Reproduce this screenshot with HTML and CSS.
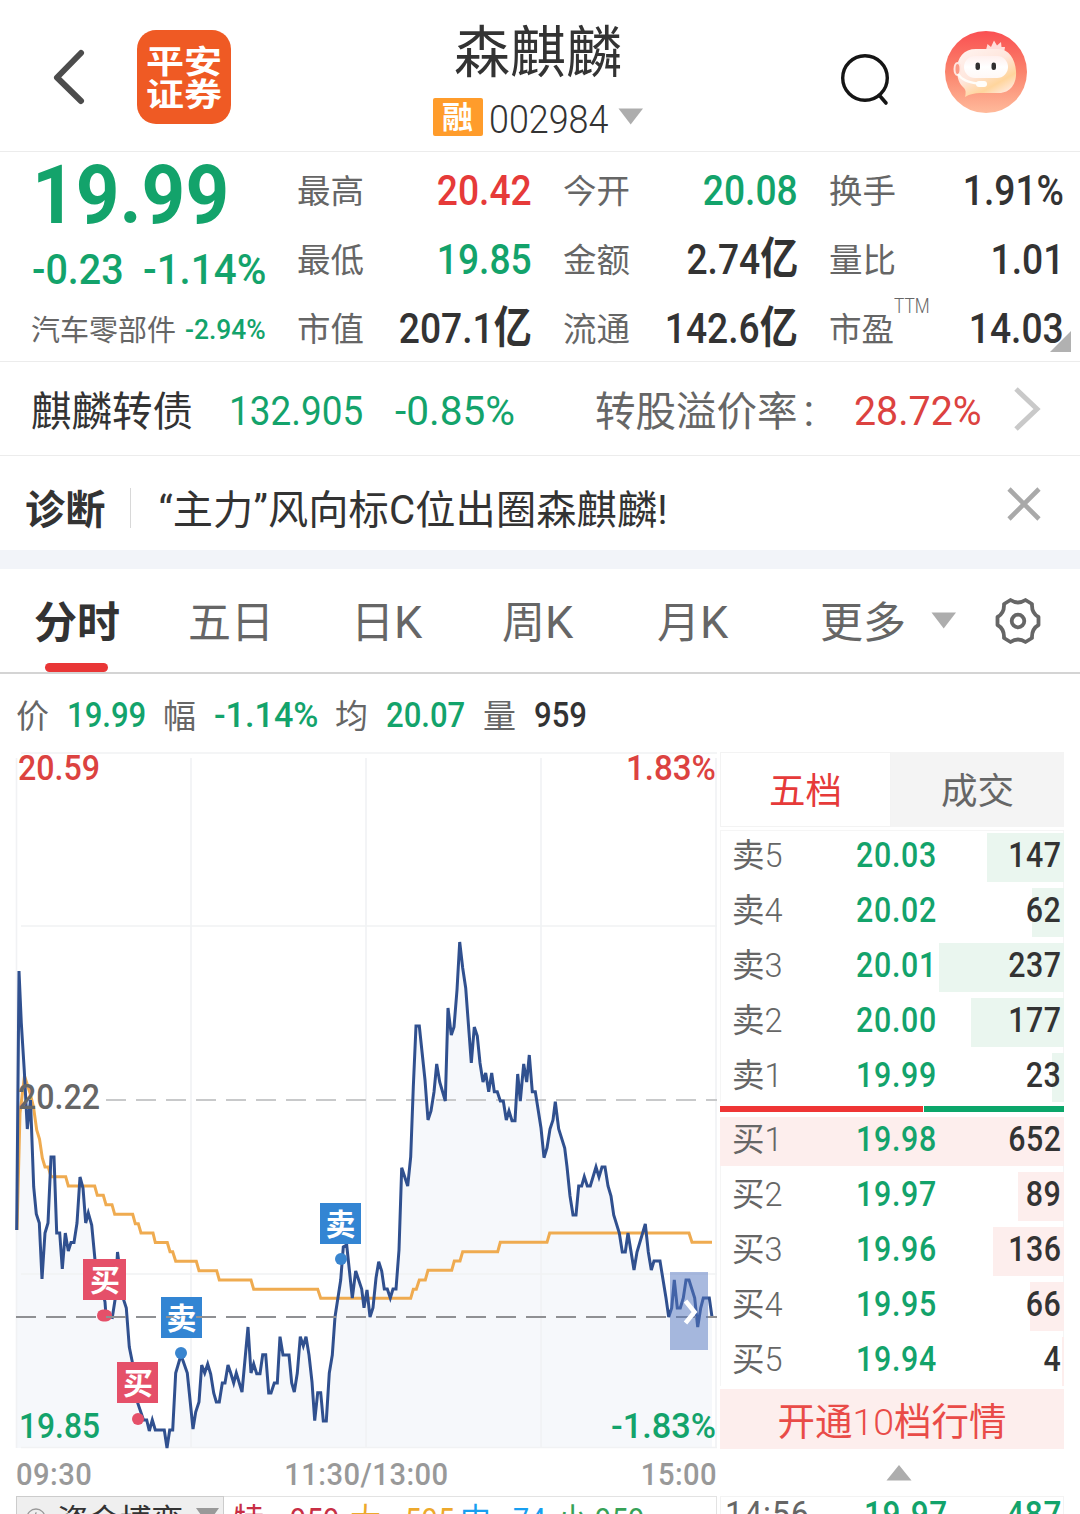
FILE: index.html
```html
<!DOCTYPE html>
<html lang="zh-CN">
<head>
    <meta charset="UTF-8">
    <meta name="viewport" content="width=device-width, initial-scale=1.0">
    <title>森麒麟 002984</title>
    <link rel="stylesheet" href="styles.css">
</head>
<body>
    <!-- Header -->
    <header class="header">
        <svg class="back" width="36" height="60" viewBox="0 0 36 60"><path d="M30 6 L6 30.500 L30 54" fill="none" stroke="#4c4c4c" stroke-width="6" stroke-linecap="round" stroke-linejoin="round"/></svg>
        <div class="logo"><span>平安</span><span>证券</span></div>
        <div class="title">
            <h1>森麒麟</h1>
            <div class="code-row">
                <span class="badge">融</span>
                <span class="code num">002984</span>
                <svg width="26" height="17" viewBox="0 0 26 17"><path d="M0.500 0.500 H25 L12.700 16.500 Z" fill="#adadad"/></svg>
            </div>
        </div>
        <svg class="search" width="52" height="56" viewBox="0 0 52 56"><circle cx="25" cy="27" r="22.300" fill="none" stroke="#151515" stroke-width="3.400"/><path d="M39.500 44.500 L46 52" stroke="#151515" stroke-width="3.600" stroke-linecap="round"/></svg>
        <svg class="avatar" width="82" height="82" viewBox="0 0 82 82">
            <defs>
                <linearGradient id="sky" x1="0" y1="0" x2="0" y2="1"><stop offset="0" stop-color="#fa5052"/><stop offset="0.500" stop-color="#fa836c"/><stop offset="1" stop-color="#ffba9b"/></linearGradient>
                <linearGradient id="head" x1="0" y1="0" x2="0.700" y2="1"><stop offset="0" stop-color="#fff4f1"/><stop offset="0.500" stop-color="#ffe6dc"/><stop offset="0.800" stop-color="#ffd59c"/><stop offset="1" stop-color="#ffe9dc"/></linearGradient>
                <linearGradient id="face" x1="0" y1="0" x2="0" y2="1"><stop offset="0" stop-color="#fff0ee"/><stop offset="0.500" stop-color="#ffffff"/><stop offset="1" stop-color="#fff8f6"/></linearGradient>
            </defs>
            <circle cx="41" cy="41" r="41" fill="url(#sky)"/>
            <path d="M41 19 L42.500 13 L46 16 L49 9.500 L52 14.500 L56 11 L56.500 16 L60 16 L59 22 Z" fill="#ffdcd9"/>
            <path d="M31 18 H53 C64 18 70 28 71 40 C72 53 65 62 54 62 H35 C30 62 25 63 20 66 C21 62 21 59 19 57 C14 53 12 46 12 39 C12 26 19 18 31 18 Z" fill="url(#head)"/>
            <ellipse cx="12.500" cy="38" rx="3" ry="6" fill="#fb9a86" stroke="#ffe6df" stroke-width="2"/>
            <rect x="19" y="25" width="44" height="22" rx="11" fill="url(#face)"/>
            <rect x="30.500" y="31.500" width="4.500" height="7.500" rx="2.200" fill="#303030"/>
            <rect x="46.500" y="31.500" width="4.500" height="7.500" rx="2.200" fill="#303030"/>
            <path d="M13 43 C17 50 25 51 35 53" fill="none" stroke="#fffdf9" stroke-width="2.400"/>
            <rect x="31" y="50" width="11" height="6" rx="3" fill="#fffefb"/>
        </svg>
    </header>

    <!-- Quote summary -->
    <section class="quote">
        <div class="price-box green">
            <div class="price num">19.99</div>
            <div class="change"><span class="num c1">-0.23</span><span class="num c2">-1.14%</span></div>
            <div class="industry"><span class="name">汽车零部件</span><span class="num c2">-2.94%</span></div>
        </div>
        <div class="stats">
            <div class="stat"><label>最高</label><b class="num red">20.42</b></div>
            <div class="stat"><label>今开</label><b class="num green">20.08</b></div>
            <div class="stat"><label>换手</label><b class="num">1.91%</b></div>
            <div class="stat"><label>最低</label><b class="num green">19.85</b></div>
            <div class="stat"><label>金额</label><b class="num">2.74<i>亿</i></b></div>
            <div class="stat"><label>量比</label><b class="num">1.01</b></div>
            <div class="stat"><label>市值</label><b class="num">207.1<i>亿</i></b></div>
            <div class="stat"><label>流通</label><b class="num">142.6<i>亿</i></b></div>
            <div class="stat last"><label>市盈<sup>TTM</sup></label><b class="num">14.03</b></div>
        </div>
        <svg class="corner" width="21" height="21" viewBox="0 0 21 21"><path d="M21 0 V21 H0 Z" fill="#b1b1b1"/></svg>
    </section>

    <!-- Convertible bond -->
    <section class="bond">
        <span class="bond-name">麒麟转债</span>
        <span class="bond-price num green">132.905</span>
        <span class="bond-change num green">-0.85%</span>
        <span class="bond-label">转股溢价率<em>:</em></span>
        <span class="bond-rate num red2">28.72%</span>
        <svg width="28" height="46" viewBox="0 0 28 46"><path d="M3 3 L24 23 L3 43" fill="none" stroke="#c9c9c9" stroke-width="5"/></svg>
    </section>

    <section class="diagnosis">
        <strong>诊断</strong>
        <p>“主力”风向标C位出圈森麒麟!</p>
        <svg width="34" height="34" viewBox="0 0 34 34"><path d="M2 2 L32 32 M32 2 L2 32" stroke="#a9a9a9" stroke-width="4.600"/></svg>
    </section>

    <!-- Chart tabs -->
    <nav class="tabs">
        <a class="tab active">分时</a>
        <a class="tab">五日</a>
        <a class="tab">日<em>K</em></a>
        <a class="tab">周<em>K</em></a>
        <a class="tab">月<em>K</em></a>
        <a class="tab more">更多</a>
        <svg class="caret" width="26" height="17" viewBox="0 0 26 17"><path d="M0.500 0.500 H25 L12.700 16.500 Z" fill="#adadad"/></svg>
        <svg class="gear" width="46" height="48" viewBox="0 0 46 48"><path d="M15.500 3 Q23 8 30.500 3 L37 7 Q36.500 16 43.500 20 V28 Q36.500 32 37 41 L30.500 45 Q23 40 15.500 45 L9 41 Q9.500 32 2.500 28 V20 Q9.500 16 9 7 Z" fill="none" stroke="#666" stroke-width="3.800" stroke-linejoin="round"/><circle cx="23" cy="24" r="6.300" fill="none" stroke="#666" stroke-width="3.800"/></svg>
    </nav>

    <div class="info">
        <span class="k">价</span><span class="num green v1">19.99</span>
        <span class="k">幅</span><span class="num green v2">-1.14%</span>
        <span class="k">均</span><span class="num green v3">20.07</span>
        <span class="k">量</span><span class="num">959</span>
    </div>

    <main class="main">
        <div class="chart-col">
            <svg class="chart" width="720" height="698" viewBox="0 751 720 698">
                <path d="M16.700 1230 L19 971 L21.300 1023 L24.300 1071 L27.300 1129 L30.500 1100 L33.700 1187 L36.300 1214 L39.300 1223 L42 1279 L45 1233 L48 1223 L51 1157 H54 L56.700 1233 H59.700 L62.300 1269 L65.300 1233 L68.300 1251 L71 1242.500 H74 L77 1223 L80 1177 L83 1188 L85.700 1223 L88.300 1213 L91.700 1225 L95 1260 L105 1302 L106 1316 L112.300 1317.500 L115 1300 L117.500 1252 L123.700 1300 L126.300 1308 L129.300 1347 L132.500 1363 L137.700 1403 L143.500 1420 H146.700 L149.300 1431 L152.300 1420 L155.300 1430 H164.300 L167 1448 L169.700 1430 H172.700 L175.700 1373 L181 1355 L187.300 1373 L193 1429 L195.700 1412 L199 1402 L201.700 1365 L204.700 1373 L207.700 1364 L210.700 1374 L213.700 1393 L216.300 1402 H219.300 L222.300 1383 H225 L228 1365 L230.700 1373 L233.700 1383 L236.300 1373 L242 1392 L248 1327 L251 1373 L253.700 1364 L256.700 1373.700 H260 L262.700 1354.700 H265.700 L268.700 1393 H271 L274.300 1383 H277.300 L280 1336.700 L283 1355 H289 L291.700 1383 L294.300 1392 L297.300 1373 L300.300 1336.700 L303.300 1346 L306 1336.700 L309 1355 L312 1382 L314.700 1420.700 L317.700 1392.700 H320.700 L323.300 1421 H326.300 L329.300 1373 L332.300 1355 L335 1317 L340.700 1280 L343.300 1247 L346.700 1245 L352.300 1298 L355.700 1271 L361.700 1289 L364 1307.700 L367 1290 L370 1317 L373 1307.700 L376 1278 L378.700 1261.700 L381.700 1271 L384.300 1289 H387.300 L390.300 1298 L393 1289 H396 L399 1250 L401.700 1167.700 L407.700 1186 L410.700 1157 L413.300 1087 L416 1026 H419.300 L425 1080 L428 1120 L431 1111 L434 1092 L436.700 1064 L439.700 1082 L445.300 1101 L448 1008 L451.300 1035 L454 1027 L457 990 L459.700 942 L462.700 968 L465.700 988 L471.300 1063 L474.300 1027 L477.300 1036 L480 1063 L483 1082 L485.700 1073 L488.700 1091.700 L491.700 1073 L494.300 1091.700 H497.300 L500.300 1101 H503.300 L506.300 1120 L509 1111 L512 1120.700 H515 L517.700 1074 L520.300 1101 L523.700 1064 L526.700 1082 L529.300 1055 L532.300 1091.700 H535.300 L541 1128 L544 1157.700 L547 1148 L550 1129 L553 1120 L555.300 1101.700 L558.700 1129 L564.700 1148 L567 1166.700 L570 1196 L573 1215 H576 L578.700 1186 H581.700 L584.300 1176.700 L587.300 1186 H590.300 L596 1167 L599 1177 L602 1167 H605 L608 1186 L611 1196 L613.700 1215 L619.300 1233 L622.300 1252 H625.300 L628 1233 L634 1270 L637 1252 L645.300 1224 L648.300 1252 L651.300 1270 L654 1261 H660 L666 1298 L668.700 1317 L671.700 1308 L674.300 1280 L677.300 1308 H680.300 L683.300 1298 L686 1280 H689 L694.700 1298 L697.700 1327 L700.700 1308 L703.300 1298 H709.300 L712 1317 V1448 H16.700 Z" fill="#f6f8fb"/>
                <!-- grid -->
                <g stroke="#f1f2f4" stroke-width="1.600" fill="none">
                    <path d="M16.500 758 V1448 M191 758 V1448 M366 758 V1448 M541 758 V1448 M716 758 V1448"/>
                    <path d="M21 753 H717 M21 926 H717 M21 1274 H717 M21 1447.500 H717"/>
                </g>
                <path d="M106 1100 H717" stroke="#c8c9ca" stroke-width="2" stroke-dasharray="20 10"/>
                <path class="avg" d="M17 1230 L20 1113 L24.500 1076 L30 1093 L33.500 1107 L36.700 1130 L39.500 1139 L42.300 1158 L45 1167 H48.300 L51 1176.700 H65.700 L68.300 1186 H94.700 L97.300 1195.300 H103.300 L106 1204.700 H112 L114.700 1214.300 H132.700 L135.300 1223.700 H138.300 L141 1233 H153 L155.300 1242.500 H167.300 L170 1251.700 H172.700 L175.700 1261.300 H196.300 L199 1270.700 H216.700 L219.300 1280 H251 L253.700 1289.300 H317.700 L320.700 1298.300 H410.700 L413.300 1289.300 H416.300 L419.300 1280 H425.300 L428 1270.300 H451.700 L454.300 1261 H460 L462.700 1251.700 H497.700 L500.300 1242.300 H547 L549.700 1233 H689 L692 1242.300 H712"/>
                <path class="line" d="M16.700 1230 L19 971 L21.300 1023 L24.300 1071 L27.300 1129 L30.500 1100 L33.700 1187 L36.300 1214 L39.300 1223 L42 1279 L45 1233 L48 1223 L51 1157 H54 L56.700 1233 H59.700 L62.300 1269 L65.300 1233 L68.300 1251 L71 1242.500 H74 L77 1223 L80 1177 L83 1188 L85.700 1223 L88.300 1213 L91.700 1225 L95 1260 L105 1302 L106 1316 L112.300 1317.500 L115 1300 L117.500 1252 L123.700 1300 L126.300 1308 L129.300 1347 L132.500 1363 L137.700 1403 L143.500 1420 H146.700 L149.300 1431 L152.300 1420 L155.300 1430 H164.300 L167 1448 L169.700 1430 H172.700 L175.700 1373 L181 1355 L187.300 1373 L193 1429 L195.700 1412 L199 1402 L201.700 1365 L204.700 1373 L207.700 1364 L210.700 1374 L213.700 1393 L216.300 1402 H219.300 L222.300 1383 H225 L228 1365 L230.700 1373 L233.700 1383 L236.300 1373 L242 1392 L248 1327 L251 1373 L253.700 1364 L256.700 1373.700 H260 L262.700 1354.700 H265.700 L268.700 1393 H271 L274.300 1383 H277.300 L280 1336.700 L283 1355 H289 L291.700 1383 L294.300 1392 L297.300 1373 L300.300 1336.700 L303.300 1346 L306 1336.700 L309 1355 L312 1382 L314.700 1420.700 L317.700 1392.700 H320.700 L323.300 1421 H326.300 L329.300 1373 L332.300 1355 L335 1317 L340.700 1280 L343.300 1247 L346.700 1245 L352.300 1298 L355.700 1271 L361.700 1289 L364 1307.700 L367 1290 L370 1317 L373 1307.700 L376 1278 L378.700 1261.700 L381.700 1271 L384.300 1289 H387.300 L390.300 1298 L393 1289 H396 L399 1250 L401.700 1167.700 L407.700 1186 L410.700 1157 L413.300 1087 L416 1026 H419.300 L425 1080 L428 1120 L431 1111 L434 1092 L436.700 1064 L439.700 1082 L445.300 1101 L448 1008 L451.300 1035 L454 1027 L457 990 L459.700 942 L462.700 968 L465.700 988 L471.300 1063 L474.300 1027 L477.300 1036 L480 1063 L483 1082 L485.700 1073 L488.700 1091.700 L491.700 1073 L494.300 1091.700 H497.300 L500.300 1101 H503.300 L506.300 1120 L509 1111 L512 1120.700 H515 L517.700 1074 L520.300 1101 L523.700 1064 L526.700 1082 L529.300 1055 L532.300 1091.700 H535.300 L541 1128 L544 1157.700 L547 1148 L550 1129 L553 1120 L555.300 1101.700 L558.700 1129 L564.700 1148 L567 1166.700 L570 1196 L573 1215 H576 L578.700 1186 H581.700 L584.300 1176.700 L587.300 1186 H590.300 L596 1167 L599 1177 L602 1167 H605 L608 1186 L611 1196 L613.700 1215 L619.300 1233 L622.300 1252 H625.300 L628 1233 L634 1270 L637 1252 L645.300 1224 L648.300 1252 L651.300 1270 L654 1261 H660 L666 1298 L668.700 1317 L671.700 1308 L674.300 1280 L677.300 1308 H680.300 L683.300 1298 L686 1280 H689 L694.700 1298 L697.700 1327 L700.700 1308 L703.300 1298 H709.300 L712 1317"/>
                <!-- buy / sell marks -->
                <rect x="97" y="1309.500" width="15" height="12" rx="6" fill="#e55069"/>
                <circle cx="138" cy="1419" r="6" fill="#e55069"/>
                <circle cx="181" cy="1353" r="6" fill="#3985cf"/>
                <circle cx="341" cy="1259" r="6" fill="#3985cf"/>
                <rect x="83" y="1259" width="43" height="41" fill="#e55069"/>
                <rect x="117" y="1362" width="41" height="41" fill="#e55069"/>
                <rect x="161" y="1297" width="41" height="41" fill="#3385d3"/>
                <rect x="320" y="1203" width="41" height="41" fill="#3385d3"/>
                <path d="M16 1317 H717" stroke="#8f9093" stroke-width="2" stroke-dasharray="20 10"/>
                <g class="mark">
                    <text x="105" y="1291">买</text>
                    <text x="138" y="1394">买</text>
                    <text x="181.500" y="1329">卖</text>
                    <text x="340.500" y="1235">卖</text>
                </g>
                <rect x="670" y="1272" width="38" height="78" fill="#5475bf" fill-opacity="0.500"/>
                <path d="M685.500 1301 L694.500 1312 L685.500 1323" fill="none" stroke="#fff" stroke-width="4.500"/>
                <g class="scale">
                    <text class="up" x="18" y="780" textLength="82" lengthAdjust="spacingAndGlyphs">20.59</text>
                    <text class="up" x="626" y="780" textLength="90" lengthAdjust="spacingAndGlyphs">1.83%</text>
                    <text class="mid" x="18" y="1109" textLength="82" lengthAdjust="spacingAndGlyphs">20.22</text>
                    <text class="down" x="19" y="1438" textLength="81" lengthAdjust="spacingAndGlyphs">19.85</text>
                    <text class="down" x="611" y="1438" textLength="105" lengthAdjust="spacingAndGlyphs">-1.83%</text>
                </g>
            </svg>
            <div class="times">
                <span class="num">09:30</span><span class="num t2">11:30/13:00</span><span class="num t3">15:00</span>
            </div>
            <div class="game">
                <div class="game-select">
                    <svg width="20" height="20" viewBox="0 0 20 20"><circle cx="10" cy="10" r="9" fill="none" stroke="#999" stroke-width="1.300"/><path d="M10 4 V12 M7 8 L10 5" stroke="#999" fill="none"/></svg>
                    <span>资金博弈</span>
                    <svg width="23" height="17" viewBox="0 0 23 17"><path d="M0 0 H23 L11.500 16 Z" fill="#999"/></svg>
                </div>
                <div class="game-nums">
                    <span class="g1">特</span><span class="g1 num">959</span>
                    <span class="g2">大</span><span class="g2 num">595</span>
                    <span class="g3">中</span><span class="g3 num">74</span>
                    <span class="g4">小</span><span class="g4 num">959</span>
                </div>
            </div>
        </div>

        <!-- Order book -->
        <aside class="book">
            <div class="book-tabs"><span class="on">五档</span><span>成交</span></div>
            <div class="rows sell">
                <div class="row"><i class="bar" style="width: 77px"></i><span class="lv">卖<em>5</em></span><span class="p num">20.03</span><span class="q num">147</span></div>
                <div class="row"><i class="bar" style="width: 32px"></i><span class="lv">卖<em>4</em></span><span class="p num">20.02</span><span class="q num">62</span></div>
                <div class="row"><i class="bar" style="width: 125px"></i><span class="lv">卖<em>3</em></span><span class="p num">20.01</span><span class="q num">237</span></div>
                <div class="row"><i class="bar" style="width: 93px"></i><span class="lv">卖<em>2</em></span><span class="p num">20.00</span><span class="q num">177</span></div>
                <div class="row"><i class="bar" style="width: 12px"></i><span class="lv">卖<em>1</em></span><span class="p num">19.99</span><span class="q num">23</span></div>
            </div>
            <div class="ratio"><i class="r"></i><i class="g"></i></div>
            <div class="rows buy">
                <div class="row"><i class="bar" style="width: 344px"></i><span class="lv">买<em>1</em></span><span class="p num">19.98</span><span class="q num">652</span></div>
                <div class="row"><i class="bar" style="width: 46px"></i><span class="lv">买<em>2</em></span><span class="p num">19.97</span><span class="q num">89</span></div>
                <div class="row"><i class="bar" style="width: 71px"></i><span class="lv">买<em>3</em></span><span class="p num">19.96</span><span class="q num">136</span></div>
                <div class="row"><i class="bar" style="width: 34px"></i><span class="lv">买<em>4</em></span><span class="p num">19.95</span><span class="q num">66</span></div>
                <div class="row"><i class="bar" style="width: 2px"></i><span class="lv">买<em>5</em></span><span class="p num">19.94</span><span class="q num">4</span></div>
            </div>
            <div class="open-ten">开通<em>10</em>档行情</div>
            <div class="fold"><svg width="26" height="16" viewBox="0 0 26 16"><path d="M0.500 15.500 H25.500 L13 0 Z" fill="#adadad"/></svg></div>
            <div class="deal"><span class="t num">14:56</span><span class="p num">19.97</span><span class="q num">487</span></div>
        </aside>
    </main>
</body>
</html>
```
FILE: styles.css
```css
/* General */
* {
    box-sizing: border-box;
}

html, body {
    margin: 0;
    height: 1514px;
    overflow: hidden;
}

body {
    width: 1080px;
    background: #fff;
    color: #333;
    font-family: Roboto, "Noto Sans CJK SC", sans-serif;
    line-height: 1;
}

svg {
    display: block;
    flex: none;
}

em, i {
    font-style: normal;
}

/* narrow figures */
.num {
    display: inline-block;
    white-space: nowrap;
    transform: scaleX(0.9);
    transform-origin: left center;
    font-weight: 500;
}

.green { color: #13a36b; }
.red { color: #e63a39; }
.red2 { color: #dc4240; }

/* Header */
.header {
    display: flex;
    height: 152px;
    border-bottom: 1px solid #ececec;
    padding: 0 53px 0 51px;
}

.back {
    margin-top: 47px;
}

.logo {
    width: 94px;
    height: 94px;
    margin: 30px 0 0 50px;
    padding-top: 13px;
    border-radius: 19px;
    background: #ef5a24;
    color: #fff;
    font-size: 38px;
    font-weight: 700;
    text-align: center;
}

.logo span {
    display: block;
    height: 33px;
    line-height: 38px;
    transform: scaleY(0.84);
}

.title {
    flex: 1;
    display: flex;
    flex-direction: column;
    align-items: center;
    padding-left: 5px;
}

.title h1 {
    margin: 24px 0 0;
    font-size: 56px;
    font-weight: 400;
    line-height: 59px;
}

.code-row {
    display: flex;
    width: 211px;
    margin-top: 15px;
}

.badge {
    width: 50px;
    height: 38px;
    border-radius: 2px;
    background: #ff9c2b;
    color: #fff;
    font-size: 31px;
    font-weight: 700;
    line-height: 39px;
    text-align: center;
}

.code {
    width: 129px;
    margin-left: 6px;
    font-size: 39px;
    font-weight: 300;
    line-height: 44px;
    transform: scaleX(0.92);
}

.code-row svg {
    margin-top: 10px;
}

.search {
    margin-top: 51px;
    margin-right: 53px;
}

.avatar {
    margin-top: 31px;
}

/* Quote */
.quote {
    position: relative;
    display: flex;
    height: 210px;
    border-bottom: 1px solid #ececec;
    padding: 4px 16px 0 32px;
}

.price-box {
    width: 266px;
}

.price {
    height: 76px;
    font-size: 82px;
    font-weight: 700;
    line-height: 78px;
    transform: scaleX(0.93);
}

.change {
    height: 74px;
    font-size: 42px;
    line-height: 76px;
    display: flex;
}

.change .c1 {
    width: 111px;
    transform: scaleX(0.94);
}

.price-box .c2 {
    transform: scaleX(0.96);
}

.industry {
    display: flex;
    font-size: 27.5px;
    line-height: 47px;
}

.industry .name {
    width: 153px;
    margin-left: -1px;
    color: #666;
    font-size: 29px;
    line-height: 50px;
}

.industry .num {
    margin-left: 1px;
}

.stats {
    display: grid;
    grid-template-columns: repeat(3, 234px);
    grid-auto-rows: 69px;
    column-gap: 32px;
}

.stat {
    display: flex;
    justify-content: space-between;
    line-height: 69px;
}

.stat label {
    margin-left: -1px;
    color: #666;
    font-size: 33.5px;
    line-height: 72px;
}

.stat b {
    font-size: 43px;
    transform-origin: right center;
    transform: scaleX(0.865);
}

.stat b i {
    font-size: 44px;
    font-weight: 700;
}

.last label {
    font-size: 32.5px;
}

.stat sup {
    display: inline-block;
    font-size: 20px;
    font-weight: 300;
    vertical-align: 28px;
    line-height: 0;
    transform: scaleX(0.86);
    transform-origin: left center;
}

.corner {
    position: absolute;
    right: 9px;
    bottom: 9px;
}

/* Bond */
.bond {
    display: flex;
    height: 94px;
    border-bottom: 1px solid #ececec;
    padding-left: 31px;
    font-size: 41px;
    line-height: 99px;
}

.bond .num { font-weight: 400; }
.bond-name { width: 198px; font-size: 40.5px; line-height: 101px; }
.bond-price { width: 166px; }
.bond .bond-change { width: 200px; transform: scaleX(0.99); }
.bond-label { width: 259px; color: #666; font-size: 40.5px; line-height: 101px; }
.bond-label em { margin-left: 6px; font-size: 44px; line-height: 0; }
.bond .bond-rate { width: 159px; transform: scaleX(0.96); }

.bond svg {
    margin-top: 24px;
}

/* Diagnosis */
.diagnosis {
    display: flex;
    align-items: center;
    height: 113px;
    border-bottom: 19px solid #f2f4f9;
    padding: 0 39px 0 25px;
    font-size: 40.2px;
}

.diagnosis strong {
    height: 40px;
    padding-right: 25px;
    border-right: 1px solid #d8d8d8;
    line-height: 45px;
    margin-top: 10px;
}

.diagnosis p {
    flex: 1;
    margin: 16px 0 0 27px;
    letter-spacing: 0.150px;
}

.diagnosis svg {
    margin-top: 1px;
}

/* Tabs */
.tabs {
    display: flex;
    height: 105px;
    border-bottom: 2px solid #d4d4d4;
    padding-left: 34px;
    color: #666;
    font-size: 43px;
    line-height: 109px;
}

.tab {
    position: relative;
    width: 154px;
}

.tab em { font-size: 45px; line-height: 0; }

.tab:nth-child(2) { width: 163px; }
.tab:nth-child(3) { width: 151px; }
.tab:nth-child(4) { width: 155px; }
.tab:nth-child(5) { width: 163px; }
.tab.more { width: 111px; }

.active {
    color: #333;
    font-weight: 700;
}

.active::after {
    content: "";
    position: absolute;
    left: 11px;
    bottom: 0;
    width: 63px;
    height: 9px;
    border-radius: 5px;
    background: #e93636;
}

.caret {
    margin-top: 43px;
}

.gear {
    margin: 28px 0 0 38px;
}

/* Info line */
.info {
    display: flex;
    height: 77px;
    padding-left: 16px;
    font-size: 34.5px;
    line-height: 83px;
}

.info .k {
    width: 51px;
    color: #666;
    font-size: 33px;
    line-height: 85px;
}

.info .v1 { width: 96px; }
.info .v2 { width: 121px; transform: scaleX(0.99); }
.info .v3 { width: 97px; }

/* Chart */
.main {
    display: flex;
    width: 1064px;
}

.chart-col {
    width: 720px;
}

.chart {
    overflow: visible;
}

.line, .avg {
    fill: none;
    stroke: #30508f;
    stroke-width: 3;
}

.avg {
    stroke: #efab50;
}

.mark {
    fill: #fff;
    font-family: "Noto Sans CJK SC", sans-serif;
    font-size: 30px;
    font-weight: 700;
    text-anchor: middle;
}

.scale {
    font-size: 35px;
    font-weight: 500;
}

.up { fill: #dc4240; }
.mid { fill: #666; }
.down { fill: #13a36b; }

.times {
    display: flex;
    justify-content: space-between;
    height: 47px;
    padding: 0 3px 0 16px;
    color: #999;
    font-size: 31px;
    line-height: 51px;
}

.times .num { font-weight: 500; letter-spacing: 0.5px; transform: scaleX(0.94); }
.times .t2 { transform-origin: center; }
.times .t3 { transform-origin: right center; }

.game {
    display: flex;
    height: 60px;
    margin: 0 3px 0 16px;
    border: 1px solid #e3e3e3;
    line-height: 46px;
}

.game-select {
    display: flex;
    width: 208px;
    margin: -1px 0 0 -1px;
    border: 1px solid #ccc;
    background: #efefef;
    padding-left: 9px;
    font-size: 31.500px;
}

.game-select span { margin: 0 13px 0 11px; line-height: 49px; }
.game-select svg { margin-top: 11px; }

.game-nums {
    display: flex;
    padding-left: 9px;
    font-size: 31px;
}

.game-nums span { width: 57px; }
.game-nums .num { width: 60px; line-height: 44px; font-size: 32px; font-weight: 400; letter-spacing: 0.500px; }
.game-nums .g2 { width: 55px; }
.game-nums .g3 { width: 53px; }
.game-nums .g3.num { width: 44px; }
.game-nums .g4 { width: 38px; }
.g1 { color: #c82f45; }
.g2 { color: #eda92c; }
.g3 { color: #189ff0; }
.g4 { color: #36a257; }

/* Order book */
.book {
    width: 344px;
    padding-top: 1px;
}

.book-tabs {
    display: flex;
    height: 75px;
    font-size: 36.500px;
    line-height: 79px;
    text-align: center;
}

.book-tabs span {
    width: 173px;
    background: #f4f4f4;
    color: #666;
}

.book-tabs .on {
    width: 171px;
    border: 1px solid #f3f3f3;
    background: #fff;
    color: #e63a39;
    line-height: 77px;
}

.rows {
    border-left: 1px solid #f5f5f5;
    border-right: 1px solid #f5f5f5;
}

.sell {
    margin-top: 3px;
    padding-top: 2px;
    border-top: 1px solid #f5f5f5;
}

.row {
    position: relative;
    display: flex;
    height: 49px;
    margin-bottom: 6px;
    padding: 0 2px 0 11px;
    font-size: 34.500px;
    line-height: 44px;
}

.sell .row:last-child { margin-bottom: 4px; }
.buy .row:last-child { margin-bottom: 3px; }

.bar {
    position: absolute;
    top: 0;
    right: -1px;
    height: 49px;
    background: #eaf6ef;
}

.buy .bar { background: #fdeeed; }

.lv {
    position: relative;
    width: 124px;
    color: #666;
    font-size: 32.500px;
    line-height: 46px;
}

.lv em { font-weight: 300; }

.row .p {
    position: relative;
    color: #13a36b;
    letter-spacing: 0.800px;
    transform: scaleX(0.88);
}

.row .q {
    position: relative;
    margin-left: auto;
    transform-origin: right center;
    letter-spacing: 0.500px;
    transform: scaleX(0.88);
}

.ratio {
    display: flex;
    height: 6px;
    margin-bottom: 5px;
    gap: 1px;
}

.ratio .r { width: 203px; background: #ef3535; }
.ratio .g { flex: 1; background: #0ba66a; }

.open-ten {
    height: 60px;
    background: #fdeeed;
    color: #e94b48;
    font-size: 37.500px;
    line-height: 66px;
    text-align: center;
}

.open-ten em {
    font-weight: 300;
}

.fold {
    display: flex;
    height: 47px;
    padding: 16px 0 0 166px;
}

.deal {
    display: flex;
    justify-content: space-between;
    height: 60px;
    border: 1px solid #f3f3f3;
    padding: 0 1px 0 4px;
    font-size: 35px;
    line-height: 36px;
}

.deal .num { letter-spacing: 0.800px; }
.deal .t { color: #666; font-weight: 400; transform: scaleX(0.93); }
.deal .p { margin-left: 5px; }
.deal .p, .deal .q { color: #13a36b; }
.deal .q { transform-origin: right center; }
```
